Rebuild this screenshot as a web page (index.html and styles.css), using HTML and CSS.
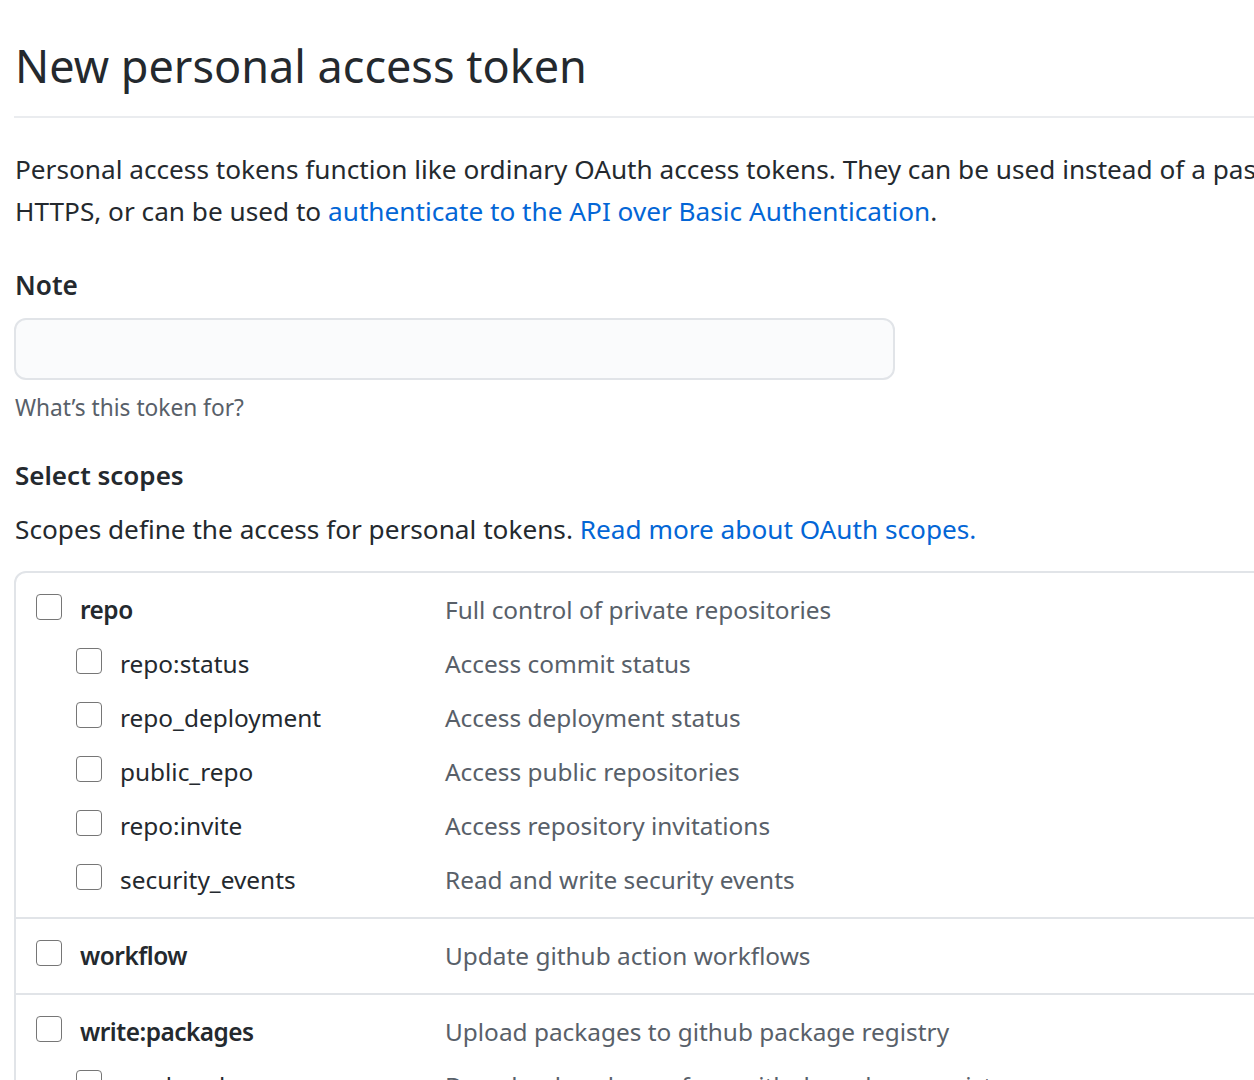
FILE: index.html
```html
<!DOCTYPE html>
<html lang="en">
<head>
<meta charset="utf-8">
<title>New personal access token</title>
<link rel="stylesheet" href="styles.css">
</head>
<body>
<main class="page">
  <div class="subhead">
    <h2 class="subhead-title">New personal access token</h2>
  </div>
  <p class="intro">Personal access tokens function like ordinary OAuth access tokens. They can be used instead of a password for Git over HTTPS, or can be used to <a href="#">authenticate to the API over Basic Authentication</a>.</p>

  <div class="form-group">
    <label class="form-label" for="note">Note</label>
    <input class="form-input" id="note" type="text">
    <p class="note-hint">What’s this token for?</p>
  </div>

  <h3 class="scopes-title">Select scopes</h3>
  <p class="scopes-desc">Scopes define the access for personal tokens. <a href="#">Read more about OAuth scopes.</a></p>

  <div class="scopes">
    <div class="scope-group">
      <div class="scope-row">
        <label class="scope-name top"><input type="checkbox" class="cb">repo</label>
        <span class="scope-desc">Full control of private repositories</span>
      </div>
      <div class="scope-row sub">
        <label class="scope-name"><input type="checkbox" class="cb">repo:status</label>
        <span class="scope-desc">Access commit status</span>
      </div>
      <div class="scope-row sub">
        <label class="scope-name"><input type="checkbox" class="cb">repo_deployment</label>
        <span class="scope-desc">Access deployment status</span>
      </div>
      <div class="scope-row sub">
        <label class="scope-name"><input type="checkbox" class="cb">public_repo</label>
        <span class="scope-desc">Access public repositories</span>
      </div>
      <div class="scope-row sub">
        <label class="scope-name"><input type="checkbox" class="cb">repo:invite</label>
        <span class="scope-desc">Access repository invitations</span>
      </div>
      <div class="scope-row sub">
        <label class="scope-name"><input type="checkbox" class="cb">security_events</label>
        <span class="scope-desc">Read and write security events</span>
      </div>
    </div>
    <div class="scope-group">
      <div class="scope-row">
        <label class="scope-name top"><input type="checkbox" class="cb">workflow</label>
        <span class="scope-desc">Update github action workflows</span>
      </div>
    </div>
    <div class="scope-group">
      <div class="scope-row">
        <label class="scope-name top"><input type="checkbox" class="cb">write:packages</label>
        <span class="scope-desc">Upload packages to github package registry</span>
      </div>
      <div class="scope-row sub">
        <label class="scope-name"><input type="checkbox" class="cb">read:packages</label>
        <span class="scope-desc">Download packages from github package registry</span>
      </div>
    </div>
  </div>
</main>
</body>
</html>
```

FILE: styles.css
```css
html, body {
  margin: 0;
  padding: 0;
  overflow: hidden;
  background: #ffffff;
}
body {
  font-family: "Noto Sans", "Open Sans", "Liberation Sans", sans-serif;
  font-size: 26.2px;
  line-height: 42px;
  color: #24292e;
}
.page {
  width: 1700px;
  padding: 0 0 0 15px;
}
a {
  color: #0366d6;
  text-decoration: none;
}
.subhead {
  padding-top: 36px;
  padding-bottom: 20px;
  border-bottom: 2px solid #eaecef;
  width: 1500px;
  margin-left: -1px;
}
.subhead-title {
  margin: 0;
  font-size: 45px;
  font-weight: 400;
  line-height: 60px;
  padding-left: 1px;
}
.intro {
  margin: 30px 0 0;
  width: 1530px;
}
.form-group {
  margin-top: 32px;
}
.form-label {
  display: block;
  font-weight: 600;
  line-height: 42px;
}
.form-input {
  display: block;
  box-sizing: border-box;
  width: 881px;
  height: 62px;
  margin: 12px 0 0 -1px;
  background: #fafbfc;
  border: 2px solid #e1e4e8;
  border-radius: 12px;
  font: inherit;
  padding: 0 16px;
}
.note-hint {
  margin: 10px 0 0;
  font-size: 22.7px;
  line-height: 36px;
  color: #586069;
}
.scopes-title {
  margin: 28px 0 0;
  font-size: 26px;
  line-height: 42px;
  font-weight: 600;
}
.scopes-desc {
  margin: 12px 0 0;
}
.scopes {
  margin: 21px 0 0 -1px;
  width: 1500px;
  border: 2px solid #e1e4e8;
  border-radius: 12px;
  font-size: 24.4px;
}
.scope-group {
  padding: 10px 0;
  border-top: 2px solid #e1e4e8;
}
.scope-group:first-child {
  border-top: none;
}
.scope-row {
  display: flex;
  align-items: center;
  height: 54px;
  padding-left: 20px;
}
.scope-row.sub {
  padding-left: 60px;
}
.scope-name {
  display: flex;
  align-items: center;
  width: 409px;
  flex: none;
}
.scope-row.sub .scope-name {
  width: 369px;
}
.scope-name.top {
  font-weight: 600;
  letter-spacing: -0.5px;
}
.cb {
  appearance: none;
  -webkit-appearance: none;
  width: 26px;
  height: 26px;
  margin: -6px 18px 0 0;
  box-sizing: border-box;
  border: 1.5px solid #767676;
  border-radius: 4px;
  background: #fff;
  flex: none;
}
.scope-desc {
  color: #586069;
}
```
